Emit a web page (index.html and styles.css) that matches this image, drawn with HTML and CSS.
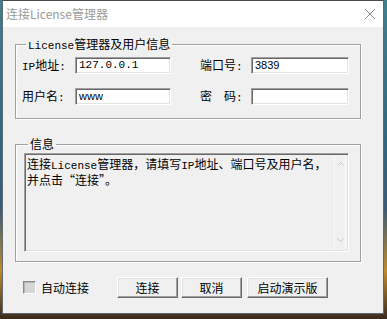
FILE: index.html
```html
<!DOCTYPE html>
<html>
<head>
<meta charset="utf-8">
<link rel="stylesheet" href="styles.css">
</head>
<body>
<div class="win">
  <div class="titlebar">
    <span class="title">连接License管理器</span>
    <svg class="close" width="12" height="12" viewBox="0 0 12 12"><path d="M1 1L11 11M11 1L1 11" stroke="#8c8c8c" stroke-width="1" fill="none"/></svg>
  </div>
  <div class="content">
    <fieldset class="group g1">
      <legend class="legend"><span class="m">License</span>管理器及用户信息</legend>
      <div class="form">
        <span class="lbl"><span class="m">IP</span>地址<span class="m">:</span></span>
        <div class="inp w96"><span class="m">127.0.0.1</span></div>
        <span class="lbl">端口号<span class="m">:</span></span>
        <div class="inp w98"><span class="s">3839</span></div>
        <span class="lbl">用户名<span class="m">:</span></span>
        <div class="inp w96"><span class="s">www</span></div>
        <span class="lbl">密　码<span class="m">:</span></span>
        <div class="inp w98"></div>
      </div>
    </fieldset>
    <fieldset class="group g2">
      <legend class="legend">信息</legend>
      <div class="memo">
        <div class="memotext">连接<span class="m">License</span>管理器，请填写<span class="m">IP</span>地址、端口号及用户名，<br>并点击“连接”。</div>
        <div class="vscroll">
          <svg width="7" height="4" viewBox="0 0 7 4"><path d="M0.5 3.5L3.5 0.5L6.5 3.5" stroke="#c4c4c4" fill="none"/></svg>
          <svg width="7" height="4" viewBox="0 0 7 4"><path d="M0.5 0.5L3.5 3.5L6.5 0.5" stroke="#c4c4c4" fill="none"/></svg>
        </div>
      </div>
    </fieldset>
    <div class="bottom">
      <span class="check"></span>
      <span class="chklbl">自动连接</span>
      <button class="btn b1">连接</button>
      <button class="btn b2">取消</button>
      <button class="btn b3">启动演示版</button>
    </div>
  </div>
</div>
</body>
</html>
```
FILE: styles.css
```css
html, body {
  margin: 0;
  padding: 0;
}
body {
  width: 387px;
  height: 319px;
  overflow: hidden;
  background: linear-gradient(to bottom, #3f7f8e 0%, #2f6680 45%, #3a5a78 65%, #c08a2a 85%, #3a2a20 100%);
  font-family: "Noto Sans CJK SC", sans-serif;
  font-size: 12px;
  color: #000;
}
.win {
  margin-left: 2px;
  width: 382px;
  height: 314px;
  box-sizing: border-box;
  border: 1px solid #5e6a72;
  border-top-color: #4a4a4a;
  background: #f0f0f0;
}
.titlebar {
  height: 26px;
  background: #fff;
  display: flex;
  align-items: center;
  justify-content: space-between;
  padding: 0 7px 0 3px;
}
.title {
  color: #9a9a9a;
  font-size: 12px;
  line-height: 14px;
}
.close {
  display: block;
  margin-top: 0;
}
.content {
  padding-left: 12px;
}
.m {
  font-family: "Liberation Mono", monospace;
  font-size: 11px;
}
.s {
  font-family: "Liberation Sans", sans-serif;
  font-size: 11px;
}
.group {
  margin: 0;
  width: 346px;
  box-sizing: border-box;
  border: 1px solid #a0a0a0;
  box-shadow: inset 1px 1px 0 #fff, 1px 1px 0 #fff;
  min-inline-size: 0;
}
.legend {
  padding: 0 2px;
  margin-left: 4px;
  line-height: 12px;
  height: 12px;
  font-size: 12px;
}
.g1 {
  margin-top: 11px;
  padding: 7px 0 13px 6px;
}
.form {
  display: grid;
  grid-template-columns: 53px 125px 51px 98px;
  grid-auto-rows: 17px;
  row-gap: 14px;
  align-items: center;
}
.lbl {
  line-height: 17px;
  white-space: nowrap;
}
.inp {
  height: 17px;
  box-sizing: border-box;
  background: #fff;
  border-top: 1px solid #a0a0a0;
  border-left: 1px solid #a0a0a0;
  border-right: 1px solid #fff;
  border-bottom: 1px solid #fff;
  box-shadow: inset 1px 1px 0 #696969, inset -1px -1px 0 #e3e3e3;
  padding: 0 3px;
  line-height: 15px;
  display: flex;
  align-items: center;
}
.w96 { width: 96px; }
.w98 { width: 98px; }
.g2 {
  margin-top: 19px;
  padding: 3px 0 9px 8px;
}
.memo {
  width: 325px;
  height: 99px;
  box-sizing: border-box;
  border-top: 1px solid #a0a0a0;
  border-left: 1px solid #a0a0a0;
  border-right: 1px solid #fff;
  border-bottom: 1px solid #fff;
  box-shadow: inset 1px 1px 0 #696969, inset -1px -1px 0 #e3e3e3;
  display: flex;
  padding: 2px 2px 2px 2px;
}
.memotext {
  flex: 1;
  white-space: nowrap;
  line-height: 13px;
  padding: 1px 0 0 0;
}
.vscroll {
  width: 12px;
  box-sizing: border-box;
  border-left: 1px solid #fafafa;
  border-right: 1px solid #fafafa;
  display: flex;
  flex-direction: column;
  justify-content: space-between;
  align-items: center;
  padding: 6px 0 7px;
}
.vscroll svg { display: block; }
.bottom {
  display: flex;
  align-items: center;
  margin-top: 15px;
  padding-left: 8px;
  height: 21px;
}
.check {
  width: 13px;
  height: 13px;
  box-sizing: border-box;
  background: #d6d6d6;
  border-top: 1px solid #8a8a8a;
  border-left: 1px solid #8a8a8a;
  border-right: 1px solid #fff;
  border-bottom: 1px solid #fff;
  box-shadow: inset 1px 1px 0 #b4b4b4;
}
.chklbl {
  margin-left: 5px;
  line-height: 14px;
}
.btn {
  height: 21px;
  box-sizing: border-box;
  padding: 0;
  font: inherit;
  font-size: 12px;
  color: #000;
  background: #f0f0f0;
  border-top: 1px solid #fff;
  border-left: 1px solid #fff;
  border-right: 1px solid #696969;
  border-bottom: 1px solid #696969;
  box-shadow: inset -1px -1px 0 #a0a0a0, inset 1px 1px 0 #e3e3e3;
  line-height: 18px;
}
.b1 { width: 61px; margin-left: 28px; }
.b2 { width: 61px; margin-left: 3px; }
.b3 { width: 81px; margin-left: 5px; }
```
